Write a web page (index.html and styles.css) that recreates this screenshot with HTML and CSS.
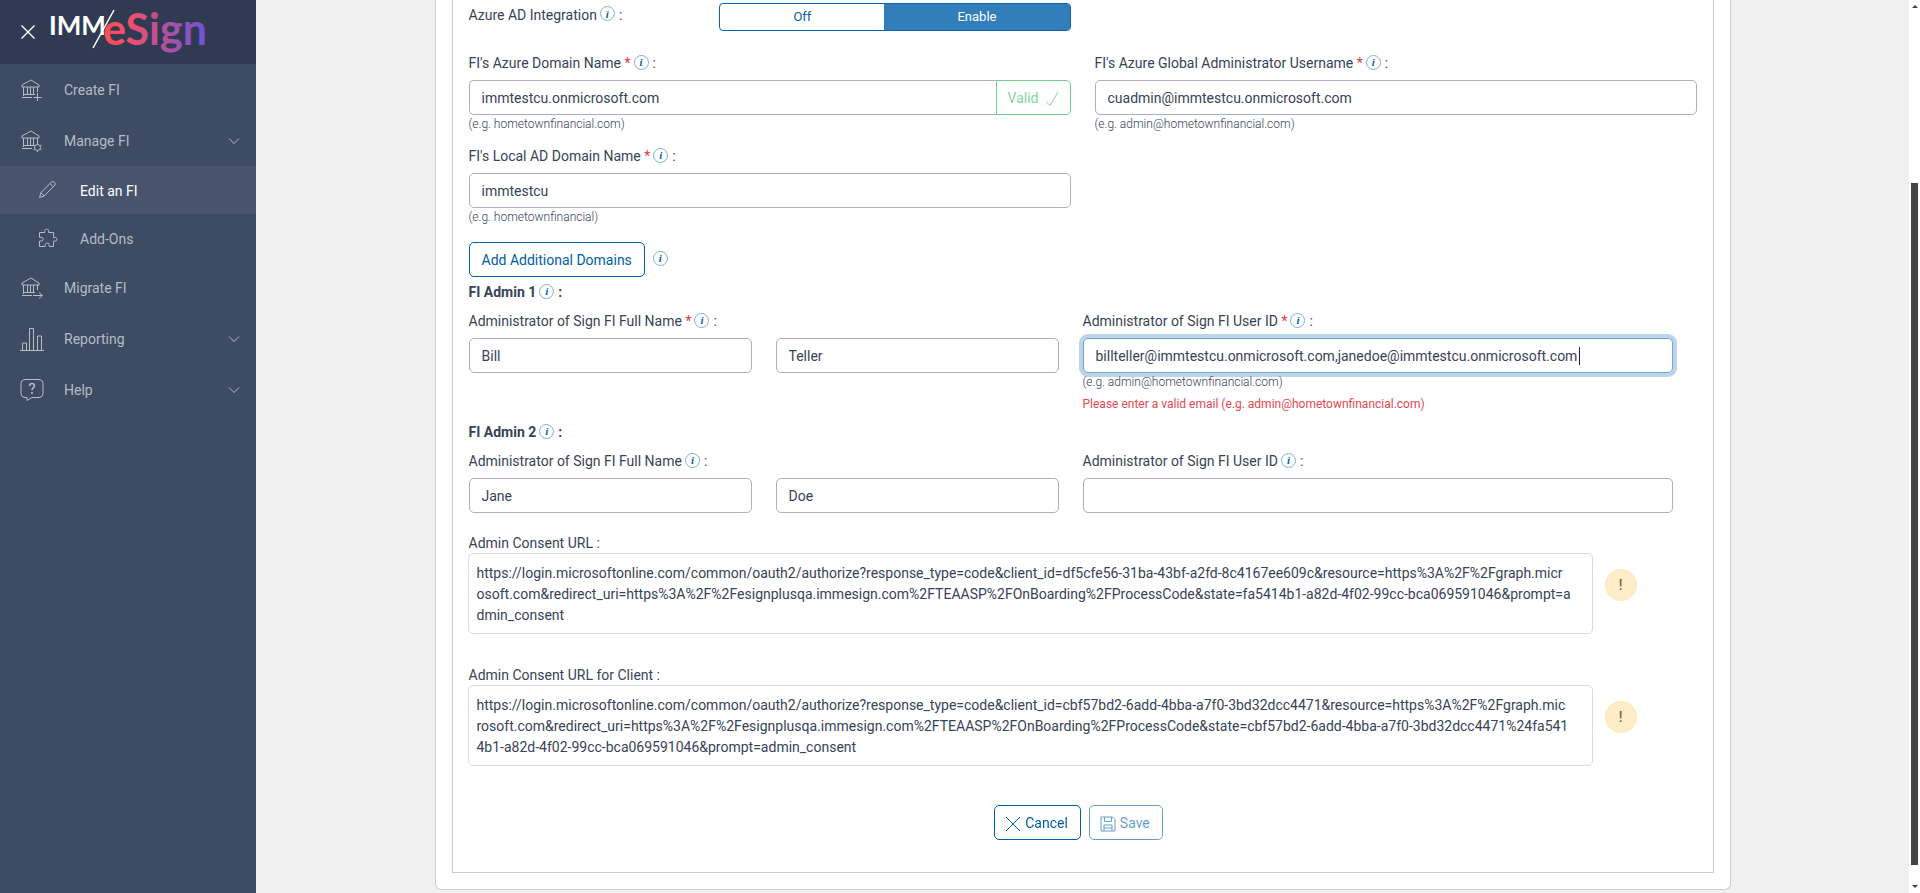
FILE: index.html
```html
<!DOCTYPE html>
<html lang="en">
<head>
<meta charset="utf-8">
<title>IMM eSign - Edit an FI</title>
<link rel="stylesheet" href="styles.css">
</head>
<body>
<svg class="defs" width="0" height="0" aria-hidden="true">
  <symbol id="bank" viewBox="0 0 22 22">
    <path d="M1 6 10 1l8 5v2H1zM2.500 8v9M6.500 8v8M9.500 8v8M12.500 8v8M16.500 8v5M2 15.500h12M1 18.500h10"/>
  </symbol>
  <symbol id="chevron" viewBox="0 0 12 8"><path d="M1 1.500 6 6.500l5-5"/></symbol>
</svg>
<div class="app">
  <aside class="sidebar">
    <header class="brand">
      <button class="close" type="button" aria-label="Close menu"><svg width="14" height="14" viewBox="0 0 14 14"><path d="M.500.500l13 13M13.500.500l-13 13"/></svg></button>
      <svg class="logo" width="160" height="64" viewBox="0 0 160 64" role="img" aria-label="IMM eSign">
        <defs><linearGradient id="fade" gradientUnits="userSpaceOnUse" x1="54" y1="0" x2="156" y2="0"><stop offset="0" stop-color="#ff4d55"/><stop offset=".25" stop-color="#f0506a"/><stop offset=".6" stop-color="#b0529c"/><stop offset="1" stop-color="#6c54d8"/></linearGradient></defs>
        <text class="logo-imm" x="-1" y="35">IMM</text>
        <path d="M43 48 64 10" stroke="#fff" stroke-width="1.500"/>
        <text class="logo-sign" x="53" y="45" fill="url(#fade)">eSign</text>
      </svg>
    </header>
    <nav class="menu" aria-label="Main">
      <a class="item" href="#"><svg class="icon" viewBox="0 0 22 22"><use href="#bank"/><path d="M16.500 14v8M12.500 18.500h8"/></svg><span>Create FI</span></a>
      <a class="item" href="#"><svg class="icon" viewBox="0 0 22 22"><use href="#bank"/><circle cx="16.500" cy="17.500" r="3"/><path d="M16.500 13v1.500M16.500 20.500v1.500M12.500 15.200l1.400.8M19.100 19l1.400.8M12.500 19.800l1.400-.8M19.100 16l1.400-.8"/></svg><span>Manage FI</span><svg class="chev" viewBox="0 0 12 8"><use href="#chevron"/></svg></a>
      <a class="item sub active" href="#"><svg class="icon" viewBox="0 0 22 22"><path d="M2.500 18.500 4 13.500 14.500 3q1.500-1 3 .2t.2 3L7.200 17l-4.700 1.500zM13 4.500l3.300 3.300M4 13.500 7.200 17"/></svg><span>Edit an FI</span></a>
      <a class="item sub" href="#"><svg class="icon" viewBox="0 0 22 22"><path d="M2.500 5.500h5.300V4c-1-2 4.500-2.600 3.800 0v1.500h5v5h1.200c2.600-1 2.600 4.500 0 3.500h-1.200v5.500h-4.500v-1.300c1-2.800-4.500-2.800-3.800 0v1.300H2.500V14H4c2.800 1 2.800-4.500 0-3.500H2.500z"/></svg><span>Add-Ons</span></a>
      <a class="item" href="#"><svg class="icon" viewBox="0 0 22 22"><use href="#bank"/><path d="M12 18.500h9M18 15.500l3.500 3-3.500 3"/></svg><span>Migrate FI</span></a>
      <a class="item" href="#"><svg class="icon wide" viewBox="0 0 24 24"><path d="M0 23.500h24M2.500 23v-7h4v7M9.500 23V1.500h4V23M17.500 23V9h4v14"/></svg><span>Reporting</span><svg class="chev" viewBox="0 0 12 8"><use href="#chevron"/></svg></a>
      <a class="item" href="#"><svg class="icon wide" viewBox="0 0 24 24"><path d="M5 1.500h14q4 0 4 4v10q0 4-4 4h-7l-5 3v-3H5q-4 0-4-4v-10q0-4 4-4z"/><path d="M9.500 8c0-3.300 5-3.300 5-.3 0 2-2.500 2-2.500 4.600M12 14v2" stroke-width="1.600"/></svg><span>Help</span><svg class="chev" viewBox="0 0 12 8"><use href="#chevron"/></svg></a>
    </nav>
  </aside>

  <main class="page">
    <div class="card">
      <form class="panel">
        <div class="pair">
          <div class="integration" role="radiogroup" aria-labelledby="azure-label">
            <div class="label" id="azure-label">Azure AD Integration<span class="info">i</span>:</div>
            <div class="toggle">
              <label class="off"><input type="radio" name="azure">Off</label>
              <label class="on"><input type="radio" name="azure" checked>Enable</label>
            </div>
          </div>
        </div>
        <div class="pair">
          <div class="field">
            <label class="label" for="domain">FI's Azure Domain Name <span class="req">*</span><span class="info">i</span>:</label>
            <div class="group">
              <input class="box" id="domain" type="text" value="immtestcu.onmicrosoft.com">
              <button class="valid" type="button">Valid<svg width="14" height="16" viewBox="0 0 14 16"><path d="M1 10.500 5 14.500 13 1"/></svg></button>
            </div>
            <small class="hint">(e.g. hometownfinancial.com)</small>
          </div>
          <div class="field">
            <label class="label" for="global">FI's Azure Global Administrator Username <span class="req">*</span><span class="info">i</span>:</label>
            <input class="box" id="global" type="text" value="cuadmin@immtestcu.onmicrosoft.com">
            <small class="hint">(e.g. admin@hometownfinancial.com)</small>
          </div>
        </div>
        <div class="pair local">
          <div class="field">
            <label class="label" for="local">FI's Local AD Domain Name <span class="req">*</span><span class="info">i</span>:</label>
            <input class="box" id="local" type="text" value="immtestcu">
            <small class="hint">(e.g. hometownfinancial)</small>
          </div>
        </div>
        <div class="domains">
          <button class="btn" type="button">Add Additional Domains</button><span class="info">i</span>
        </div>

        <section class="admin">
          <h2 class="label title">FI Admin 1<span class="info">i</span>:</h2>
          <div class="quad">
            <div class="field">
              <label class="label" for="first1">Administrator of Sign FI Full Name <span class="req">*</span><span class="info">i</span>:</label>
              <input class="box" id="first1" type="text" value="Bill">
            </div>
            <div class="field end"><input class="box" type="text" value="Teller" aria-label="Last name"></div>
            <div class="field span">
              <label class="label" for="user1">Administrator of Sign FI User ID <span class="req">*</span><span class="info">i</span>:</label>
              <input class="box editing" id="user1" type="text" value="billteller@immtestcu.onmicrosoft.com,janedoe@immtestcu.onmicrosoft.com">
              <small class="hint">(e.g. admin@hometownfinancial.com)</small>
              <p class="error">Please enter a valid email (e.g. admin@hometownfinancial.com)</p>
            </div>
          </div>
        </section>
        <section class="admin second">
          <h2 class="label title">FI Admin 2<span class="info">i</span>:</h2>
          <div class="quad">
            <div class="field">
              <label class="label" for="first2">Administrator of Sign FI Full Name<span class="info">i</span>:</label>
              <input class="box" id="first2" type="text" value="Jane">
            </div>
            <div class="field end"><input class="box" type="text" value="Doe" aria-label="Last name"></div>
            <div class="field span">
              <label class="label" for="user2">Administrator of Sign FI User ID<span class="info">i</span>:</label>
              <input class="box" id="user2" type="text">
            </div>
          </div>
        </section>

        <div class="consents">
          <div class="consent">
            <label for="url1">Admin Consent URL :</label>
            <div class="consent-row">
              <textarea id="url1" rows="3" readonly>https://login.microsoftonline.com/common/oauth2/authorize?response_type=code&amp;client_id=df5cfe56-31ba-43bf-a2fd-8c4167ee609c&amp;resource=https%3A%2F%2Fgraph.micr
osoft.com&amp;redirect_uri=https%3A%2F%2Fesignplusqa.immesign.com%2FTEAASP%2FOnBoarding%2FProcessCode&amp;state=fa5414b1-a82d-4f02-99cc-bca069591046&amp;prompt=a
dmin_consent</textarea>
              <span class="warn">!</span>
            </div>
          </div>
          <div class="consent">
            <label for="url2">Admin Consent URL for Client :</label>
            <div class="consent-row">
              <textarea id="url2" rows="3" readonly>https://login.microsoftonline.com/common/oauth2/authorize?response_type=code&amp;client_id=cbf57bd2-6add-4bba-a7f0-3bd32dcc4471&amp;resource=https%3A%2F%2Fgraph.mic
rosoft.com&amp;redirect_uri=https%3A%2F%2Fesignplusqa.immesign.com%2FTEAASP%2FOnBoarding%2FProcessCode&amp;state=cbf57bd2-6add-4bba-a7f0-3bd32dcc4471%24fa541
4b1-a82d-4f02-99cc-bca069591046&amp;prompt=admin_consent</textarea>
              <span class="warn">!</span>
            </div>
          </div>
        </div>
        <div class="actions">
          <button class="btn" type="button"><svg width="16" height="16" viewBox="0 0 16 16"><path d="M1 1l14 14M15 1 1 15"/></svg>Cancel</button>
          <button class="btn" type="submit" disabled><svg width="16" height="16" viewBox="0 0 16 16"><path d="M1 1h11.500L15 3.500V15H1zM4.500 1v4.500h7V1M4 15V9h8v6M4 12h8"/></svg>Save</button>
        </div>
      </form>
    </div>
  </main>
  <div class="scrollbar" aria-hidden="true"><i class="up"></i><i class="thumb"></i><i class="down"></i></div>
</div>
<script src="focus.js"></script>
</body>
</html>
```
FILE: focus.js
```js
const field = document.getElementById("user1");
field.focus({ preventScroll: true });
field.setSelectionRange(field.value.length, field.value.length);
field.addEventListener("input", () => field.classList.remove("editing"));
```
FILE: styles.css
```css
* { box-sizing: border-box; }
body {
  margin: 0;
  background: #f0f0f0;
  color: #374356;
  font: 14px/21px Roboto, "Liberation Sans", sans-serif;
}
input, button, textarea { font: inherit; color: inherit; margin: 0; }
svg { fill: none; stroke: currentColor; }
.defs { position: absolute; }
.app { display: flex; min-height: 100vh; }

.sidebar { flex: none; width: 256px; background: #3d4b63; color: #b5bcc6; }
.brand { display: flex; align-items: center; gap: 15px; height: 64px; padding-left: 21px; background: #303b53; }
.close { display: flex; padding: 0; border: 0; background: none; color: #fff; stroke-width: 1.4; }
.logo text { stroke: none; }
.logo-imm { font: 700 26px Lato, sans-serif; fill: #fff; }
.logo-sign { font: 700 43px Lato, sans-serif; }
.menu { display: flex; flex-direction: column; }
.item { display: flex; align-items: center; height: 51px; padding: 0 16px 0 20px; color: inherit; text-decoration: none; }
.item span { flex: 1; padding-top: 2px; }
.icon { width: 22px; height: 22px; margin: 0 21px 0 1px; }
.icon.wide { width: 24px; height: 24px; margin: 0 20px 0 0; }
.chev { width: 12px; height: 8px; }
.sub { height: 48px; padding-left: 36px; }
.active { background: #47546b; color: #fff; }
.active .icon { color: #b5bcc6; }

.page { flex: 1; min-width: 0; padding-bottom: 3px; }
.card { max-width: 1296px; margin: 0 auto; padding: 0 16px 16px; background: #fff; border: 1px solid #cfd0d3; border-top: 0; border-radius: 0 0 6px 6px; }
.panel { padding: 3px 16px 32px; border: 1px solid #cbccce; border-top: 0; }
.pair { display: grid; grid-template-columns: 1fr 1fr; gap: 24px; margin-bottom: 22px; }
.pair + .pair { margin-bottom: 13px; }
.pair + .pair.local { margin-bottom: 16px; }
.integration { display: grid; grid-template-columns: 5fr 7fr; align-items: start; min-width: 0; }
.field { display: flex; flex-direction: column; min-width: 0; }
.label { display: flex; align-items: center; height: 21px; white-space: pre; }
.integration .label { height: 24px; }
.field .label { margin-bottom: 6px; }
.req { color: #e5393f; }
.info { display: inline-flex; flex: none; align-items: center; justify-content: center; width: 15px; height: 15px; margin: 0 4px 3px 3px; border: 1px solid #7fb0cc; border-radius: 50%; color: #0a5f9e; font: italic 700 11px/12px "Liberation Serif", serif; }
.toggle { display: flex; height: 28px; border: 1px solid #0a62a8; border-radius: 4px; overflow: hidden; font-size: 13px; line-height: 18px; }
.toggle label { display: flex; align-items: center; justify-content: center; }
.toggle input { position: absolute; opacity: 0; }
.off { flex: 47; color: #0a5f9e; }
.on { flex: 53; background: #317ebb; color: #fff; }
.box { width: 100%; height: 35px; padding: 0 12px; background: #fff; border: 1px solid #a9b0be; border-radius: 5px; }
.box:focus { outline: 0; border-color: #6da6d6; box-shadow: 0 0 0 4px #bdd5e8; }
.editing { background: linear-gradient(#1c2430, #1c2430) 495px center / 1px 18px no-repeat #fff; caret-color: transparent; }
.group { display: flex; }
.group .box { flex: 1; min-width: 0; border-right: 0; border-radius: 5px 0 0 5px; }
.valid { display: flex; align-items: center; gap: 6px; padding: 2px 11px 0; background: #fff; border: 1px solid #6fcf8f; border-radius: 0 5px 5px 0; color: #82d69d; }
.hint { font-size: 12px; font-weight: 300; line-height: 18px; }
.error { margin: 4px 0 0; color: #e5484f; font-size: 12px; line-height: 18px; }

.domains { display: flex; align-items: center; gap: 5px; margin-bottom: 5px; }
.btn { display: flex; align-items: center; height: 35px; padding: 2px 12px 0; background: #fff; border: 1px solid #005ea6; border-radius: 5px; color: #005ea6; }
.btn:disabled { opacity: .6; }
.admin { padding-right: 24px; margin-bottom: 9px; }
.admin.second { margin-bottom: 19px; }
.title { margin: 0 0 8px; font-size: 14px; font-weight: 700; }
.quad { display: grid; grid-template-columns: repeat(4, 1fr); gap: 24px; }
.span { grid-column: span 2; }
.end { padding-top: 27px; }
.consents { display: flex; flex-direction: column; gap: 30px; }
.consent { display: flex; flex-direction: column; }
.consent label { padding-top: 2px; line-height: 19px; }
.consent-row { display: flex; gap: 12px; margin: 0 60px 0 -1px; }
textarea { flex: 1; display: block; padding: 9px 8px 7px; background: #fff; border: 1px solid #d9dbdf; border-radius: 5px; resize: none; overflow: hidden; word-break: break-all; outline: 0; }
.warn { display: flex; align-items: center; justify-content: center; width: 32px; height: 32px; margin-top: 16px; background: #ffecc9; border: 1px solid #ffe5b4; border-radius: 50%; color: #7d692f; font-weight: 500; }
.actions { display: flex; justify-content: center; gap: 8px; margin-top: 39px; padding-right: 8px; }
.actions .btn { padding: 2px 12px 0 10px; gap: 4px; }

.scrollbar { display: flex; flex-direction: column; align-items: center; flex: none; width: 11px; padding: 5px 0; background: #fff; }
.up, .down { border: 3px solid transparent; border-width: 0 3px 3px; border-bottom-color: #444; }
.down { border-width: 3px 3px 0; border-top-color: #444; }
.thumb { flex: 1; width: 7px; margin: 175px 0 20px; background: #444; }
```
